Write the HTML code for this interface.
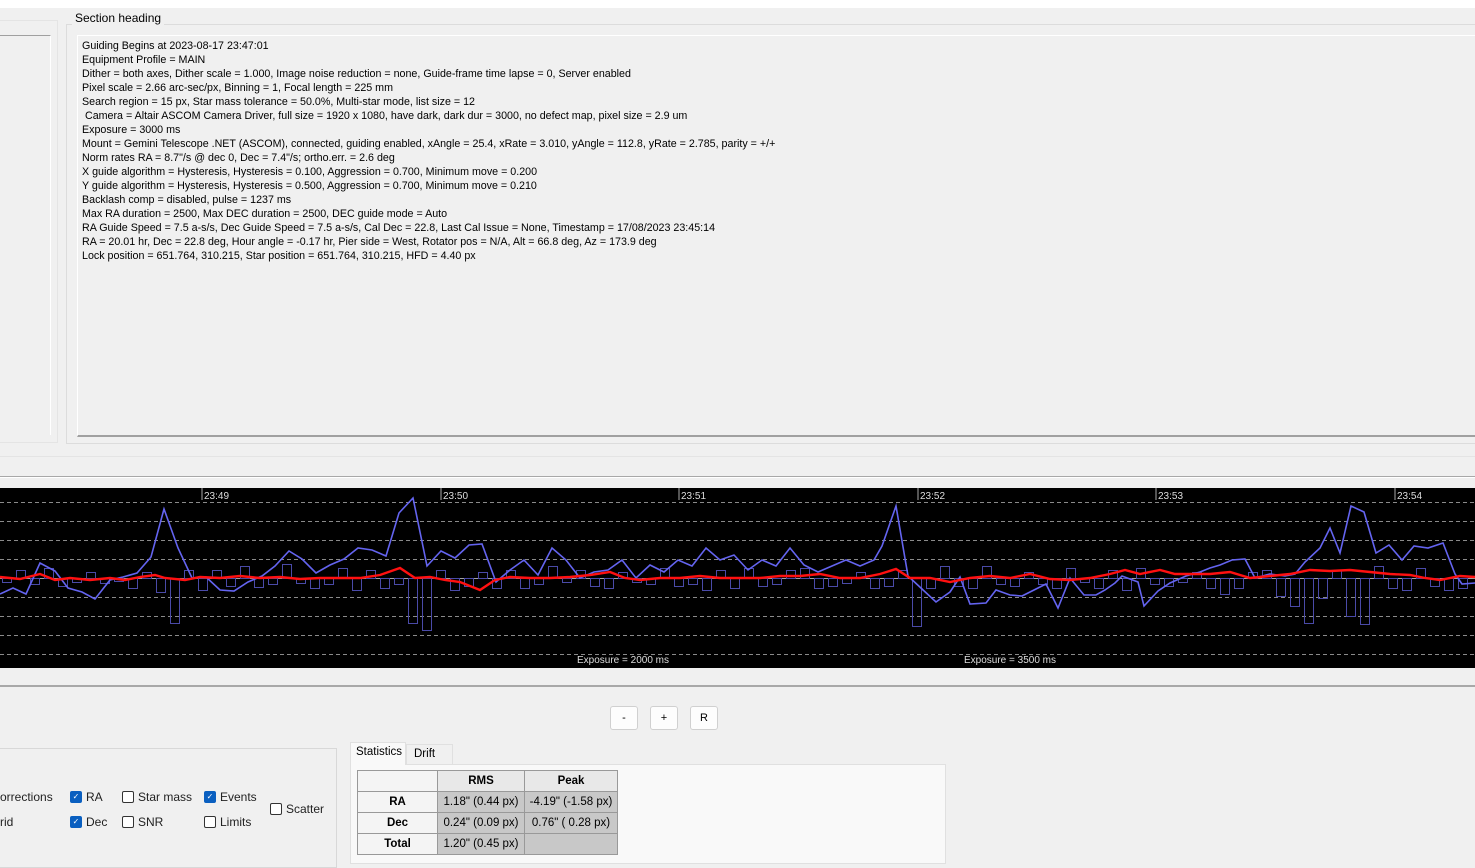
<!DOCTYPE html>
<html><head><meta charset="utf-8"><style>
*{margin:0;padding:0;box-sizing:border-box}
body{width:1475px;height:856px;background:#f0f0f0;font-family:"Liberation Sans",sans-serif;position:relative;overflow:hidden;color:#000}
.a{position:absolute}
#log{left:77px;top:35px;width:1400px;height:402px;border:1px solid #a0a0a0;border-right:none;border-bottom:2px solid #a0a0a0;border-left-color:#fff;border-top-color:#fff;padding:3px 0 0 4px;font-size:10.7px;line-height:14px;white-space:pre}
.btn{top:706px;width:28px;height:24px;background:#fdfdfd;border:1px solid #d0d0d0;border-radius:3px;font-size:11px;text-align:center;line-height:22px}
.cb{font-size:12px;color:#222;line-height:14px}
.box{display:inline-block;width:12px;height:12px;border:1px solid #333;border-radius:2px;vertical-align:top;margin-top:1px;margin-right:4px;background:#fff}
.on{background:#0a5fc0;border-color:#0a5fc0;color:#fff;font-size:8px;line-height:10px;text-align:center}
table{border-collapse:collapse;font-size:11.5px}
td{border:1px solid #999;height:21px;text-align:center;padding:0}
</style></head><body>
<div class="a" style="left:0;top:0;width:1475px;height:8px;background:#fff"></div>
<div class="a" style="left:0;top:20px;width:58px;height:423px;border:1px solid #e4e4e4;border-left:none"></div>
<div class="a" style="left:0;top:35px;width:51px;height:400px;border-top:1px solid #a0a0a0;border-right:1px solid #fff"></div>
<div class="a" style="left:66px;top:24px;width:1420px;height:420px;border:1px solid #dcdcdc"></div>
<div class="a" style="left:72px;top:11px;font-size:12px;background:#f0f0f0;padding:0 3px">Section heading</div>
<div class="a" id="log">Guiding Begins at 2023-08-17 23:47:01
Equipment Profile = MAIN
Dither = both axes, Dither scale = 1.000, Image noise reduction = none, Guide-frame time lapse = 0, Server enabled
Pixel scale = 2.66 arc-sec/px, Binning = 1, Focal length = 225 mm
Search region = 15 px, Star mass tolerance = 50.0%, Multi-star mode, list size = 12
 Camera = Altair ASCOM Camera Driver, full size = 1920 x 1080, have dark, dark dur = 3000, no defect map, pixel size = 2.9 um
Exposure = 3000 ms
Mount = Gemini Telescope .NET (ASCOM), connected, guiding enabled, xAngle = 25.4, xRate = 3.010, yAngle = 112.8, yRate = 2.785, parity = +/+
Norm rates RA = 8.7"/s @ dec 0, Dec = 7.4"/s; ortho.err. = 2.6 deg
X guide algorithm = Hysteresis, Hysteresis = 0.100, Aggression = 0.700, Minimum move = 0.200
Y guide algorithm = Hysteresis, Hysteresis = 0.500, Aggression = 0.700, Minimum move = 0.210
Backlash comp = disabled, pulse = 1237 ms
Max RA duration = 2500, Max DEC duration = 2500, DEC guide mode = Auto
RA Guide Speed = 7.5 a-s/s, Dec Guide Speed = 7.5 a-s/s, Cal Dec = 22.8, Last Cal Issue = None, Timestamp = 17/08/2023 23:45:14
RA = 20.01 hr, Dec = 22.8 deg, Hour angle = -0.17 hr, Pier side = West, Rotator pos = N/A, Alt = 66.8 deg, Az = 173.9 deg
Lock position = 651.764, 310.215, Star position = 651.764, 310.215, HFD = 4.40 px</div>
<div class="a" style="left:0;top:456px;width:1475px;height:1px;background:#e4e4e4"></div>
<div class="a" style="left:0;top:476px;width:1475px;height:2px;background:#a8a8a8;border-bottom:1px solid #fff"></div>
<svg class="a" style="left:0;top:488px" width="1475" height="180" viewBox="0 488 1475 180">
<rect x="0" y="488" width="1475" height="180" fill="#000"/>
<g stroke="#8a8a8a" stroke-dasharray="4,3" stroke-width="1">
<line x1="0" x2="1475" y1="502.5" y2="502.5"/><line x1="0" x2="1475" y1="521.5" y2="521.5"/><line x1="0" x2="1475" y1="540.5" y2="540.5"/><line x1="0" x2="1475" y1="559.5" y2="559.5"/><line x1="0" x2="1475" y1="597.5" y2="597.5"/><line x1="0" x2="1475" y1="616.5" y2="616.5"/><line x1="0" x2="1475" y1="635.5" y2="635.5"/><line x1="0" x2="1475" y1="654.5" y2="654.5"/></g>
<line x1="0" x2="1475" y1="578.5" y2="578.5" stroke="#a0a0a0"/>
<g stroke="#aaa"><line x1="202" x2="202" y1="488" y2="500"/><line x1="441" x2="441" y1="488" y2="500"/><line x1="679" x2="679" y1="488" y2="500"/><line x1="918" x2="918" y1="488" y2="500"/><line x1="1156" x2="1156" y1="488" y2="500"/><line x1="1395" x2="1395" y1="488" y2="500"/></g>
<g fill="#ddd" font-size="10" font-family="Liberation Sans"><text x="204" y="499">23:49</text><text x="443" y="499">23:50</text><text x="681" y="499">23:51</text><text x="920" y="499">23:52</text><text x="1158" y="499">23:53</text><text x="1397" y="499">23:54</text>
<text x="577" y="663">Exposure = 2000 ms</text><text x="964" y="663">Exposure = 3500 ms</text></g>
<g id="bars" fill="none" stroke="#4a4aa8" stroke-width="1"></g>
<polyline fill="none" stroke="#6464f0" stroke-width="1.6" points="0,594 13,588 26,594 40,563 55,571 68,588 82,592 95,599 110,580 123,577 137,573 151,557 164,509 178,548 192,578 206,577 220,590 234,591 248,582 262,576 275,566 289,551 302,559 316,573 330,565 344,559 358,548 372,550 386,556 399,513 413,498 427,566 441,551 455,558 469,545 482,544 496,582 510,570 524,560 538,575 552,548 566,560 580,578 594,572 608,570 622,560 636,578 650,565 664,572 678,560 692,566 706,548 720,560 734,555 748,570 762,560 776,566 790,548 804,565 818,572 832,566 846,560 860,566 874,560 882,546 896,506 908,576 922,589 936,602 950,592 960,577 970,604 986,603 996,590 1010,595 1022,596 1032,591 1046,584 1058,608 1070,578 1084,595 1096,595 1105,590 1115,583 1122,576 1138,582 1144,606 1158,591 1170,583 1186,576 1200,572 1210,568 1220,565 1232,560 1245,559 1255,578 1270,574 1285,576 1295,574 1305,562 1320,548 1330,528 1340,553 1351,506 1364,512 1376,553 1389,545 1402,560 1414,546 1428,548 1443,543 1455,574 1462,584 1475,583"/>
<polyline fill="none" stroke="#ff1010" stroke-width="2.4" points="0,577 20,579 40,574 55,580 70,578 90,580 110,578 125,580 140,577 155,575 165,578 185,580 200,577 220,578 240,576 260,578 280,577 300,579 320,578 340,578 360,578 380,575 400,568 415,578 430,577 445,580 460,582 480,590 495,580 510,577 530,578 550,578 570,577 590,575 610,572 625,578 640,580 660,578 680,578 700,576 720,578 740,578 760,578 780,576 800,576 820,574 840,578 860,578 880,574 896,569 910,578 930,578 950,582 970,578 990,576 1010,578 1030,574 1050,579 1070,580 1090,578 1110,574 1125,570 1140,574 1160,570 1175,574 1190,574 1210,574 1230,572 1250,578 1270,576 1290,574 1310,570 1330,571 1350,570 1370,572 1390,574 1410,575 1425,578 1440,580 1460,576 1475,577"/>
</svg>
<script>
var v=[4,-8,6,-10,8,4,-6,5,3,10,-6,14,45,-8,12,-8,8,-12,9,6,-14,5,10,6,-10,12,-8,10,6,45,52,-8,12,8,-6,10,-8,10,6,-12,4,-8,8,10,-6,4,6,-10,8,6,12,-8,10,-10,8,6,-8,-10,10,8,5,-6,10,8,-8,48,10,-12,8,10,-12,6,8,-6,6,10,-10,4,10,-8,12,-10,6,8,4,-6,10,16,10,-6,-8,18,28,45,20,-8,38,46,-12,10,12,-10,8,12,10,-6];
var g=document.getElementById('bars'),s='';
for(var i=0;i<v.length;i++){var x=2+i*14,h=v[i];if(x>1470)break;var y=h>0?578:578+h;s+='<rect x="'+(x+0.5)+'" y="'+(y+0.5)+'" width="9" height="'+Math.abs(h)+'"/>';}
g.innerHTML=s;
</script>
<div class="a" style="left:0;top:685px;width:1475px;height:2px;background:#a8a8a8"></div>
<div class="a btn" style="left:610px">-</div>
<div class="a btn" style="left:650px">+</div>
<div class="a btn" style="left:690px">R</div>
<div class="a" style="left:-2px;top:748px;width:339px;height:120px;border:1px solid #d8d8d8"></div>
<div class="a cb" style="left:0;top:790px">orrections</div>
<div class="a cb" style="left:0;top:815px">rid</div>
<div class="a cb" style="left:70px;top:790px"><span class="box on">✓</span>RA</div>
<div class="a cb" style="left:70px;top:815px"><span class="box on">✓</span>Dec</div>
<div class="a cb" style="left:122px;top:790px"><span class="box"></span>Star mass</div>
<div class="a cb" style="left:122px;top:815px"><span class="box"></span>SNR</div>
<div class="a cb" style="left:204px;top:790px"><span class="box on">✓</span>Events</div>
<div class="a cb" style="left:204px;top:815px"><span class="box"></span>Limits</div>
<div class="a cb" style="left:270px;top:802px"><span class="box"></span>Scatter</div>
<div class="a" style="left:350px;top:764px;width:596px;height:100px;background:#f9f9f9;border:1px solid #e0e0e0"></div>
<div class="a" style="left:350px;top:742px;width:56px;height:23px;background:#f9f9f9;border:1px solid #e0e0e0;border-bottom:none;font-size:11.5px;padding:3px 0 0 5px">Statistics</div>
<div class="a" style="left:406px;top:744px;width:47px;height:20px;background:#f0f0f0;border:1px solid #e0e0e0;border-bottom:none;font-size:11.5px;padding:3px 0 0 7px">Drift</div>
<table class="a" style="left:357px;top:770px;width:261px">
<tr><td style="width:80px;background:#f4f4f4"></td><td style="width:87px;background:#e8e8e8;font-weight:bold;height:19px">RMS</td><td style="background:#e8e8e8;font-weight:bold">Peak</td></tr>
<tr><td style="background:#f4f4f4;font-weight:bold">RA</td><td style="background:#c8c8c8">1.18" (0.44 px)</td><td style="background:#c8c8c8">-4.19" (-1.58 px)</td></tr>
<tr><td style="background:#f4f4f4;font-weight:bold">Dec</td><td style="background:#c8c8c8">0.24" (0.09 px)</td><td style="background:#c8c8c8">0.76" ( 0.28 px)</td></tr>
<tr><td style="background:#f4f4f4;font-weight:bold">Total</td><td style="background:#c8c8c8">1.20" (0.45 px)</td><td style="background:#c8c8c8"></td></tr>
</table>
</body></html>
